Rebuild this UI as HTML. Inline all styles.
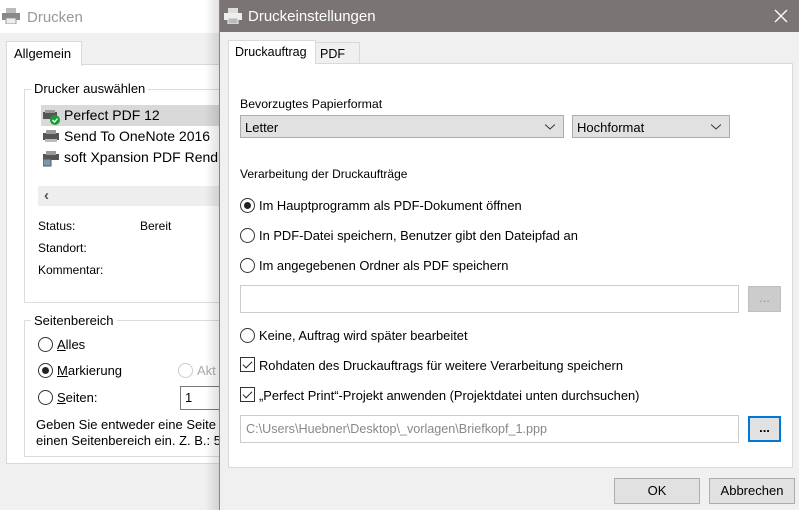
<!DOCTYPE html>
<html><head><meta charset="utf-8"><style>
*{margin:0;padding:0;box-sizing:border-box}
body{width:799px;height:510px;overflow:hidden;background:#f0f0f0;font-family:"Liberation Sans","DejaVu Sans",sans-serif;font-size:12px;color:#000;position:relative}
.a{position:absolute}
.t{position:absolute;white-space:nowrap}
.o{font-size:12.9px}
.radio{position:absolute;width:15px;height:15px;border:1px solid #333;border-radius:50%;background:#fff}
.radio.on::after{content:"";position:absolute;left:3px;top:3px;width:7px;height:7px;border-radius:50%;background:#222}
.chk{position:absolute;width:15px;height:15px;border:1px solid #333;background:#fff}
.chk::after{content:"";position:absolute;left:4px;top:1px;width:4px;height:8px;border:solid #222;border-width:0 1.5px 1.5px 0;transform:rotate(45deg)}
.combo{position:absolute;height:23px;background:#e1e1e1;border:1px solid #adadad;padding:4px 0 0 4px;font-size:13px}
.combo svg{position:absolute;right:8px;top:8px}
.btn{position:absolute;background:#e1e1e1;border:1px solid #adadad;text-align:center;font-size:13px}
</style></head><body>
<div class="a" style="left:0;top:0;width:230px;height:33px;background:#fff"></div>
<svg class="a" style="left:2px;top:8px" width="18" height="16"><rect x="4" y="0" width="10" height="5" fill="#bbb"/><rect x="0" y="5" width="18" height="7" fill="#888"/><rect x="4" y="10" width="10" height="6" fill="#eee" stroke="#999"/></svg>
<div class="t" style="left:27px;top:9px;font-size:15px;color:#999">Drucken</div>
<div class="a" style="left:6px;top:64px;width:220px;height:400px;background:#fff;border:1px solid #d9d9d9"></div>
<div class="a" style="left:6px;top:41px;width:76px;height:25px;background:#fff;border:1px solid #d9d9d9;border-bottom:none"></div>
<div class="t" style="left:14px;top:46px;font-size:13px">Allgemein</div>
<div class="a" style="left:24px;top:89px;width:210px;height:214px;border:1px solid #dcdcdc"></div>
<div class="t" style="left:31px;top:81px;font-size:13px;background:#fff;padding:0 3px">Drucker auswählen</div>
<div class="a" style="left:41px;top:105px;width:190px;height:21px;background:#d9d9d9"></div>
<svg class="a" style="left:43px;top:110px" width="18" height="16"><rect x="0" y="2" width="14" height="7" fill="#555"/><rect x="2" y="0" width="10" height="3" fill="#999"/><circle cx="12" cy="10" r="5" fill="#1a9b3a"/><path d="M9.5 10l2 2 3-3.5" stroke="#fff" fill="none" stroke-width="1.3"/></svg>
<div class="t" style="left:64px;top:107px;font-size:14px">Perfect PDF 12</div>
<svg class="a" style="left:43px;top:130px" width="18" height="14"><rect x="0" y="3" width="16" height="7" fill="#555"/><rect x="3" y="0" width="10" height="4" fill="#999"/><rect x="2" y="9" width="12" height="3" fill="#bbb"/></svg>
<div class="t" style="left:64px;top:128px;font-size:14px">Send To OneNote 2016</div>
<svg class="a" style="left:43px;top:151px" width="18" height="16"><rect x="0" y="3" width="16" height="6" fill="#555"/><rect x="3" y="0" width="10" height="4" fill="#999"/><rect x="0" y="8" width="8" height="7" fill="#79a" stroke="#555"/></svg>
<div class="t" style="left:64px;top:149px;font-size:14px">soft Xpansion PDF Rend</div>
<div class="a" style="left:38px;top:186px;width:185px;height:20px;background:#eee"></div>
<div class="t" style="left:44px;top:187px;font-size:15px;color:#555;font-weight:bold">‹</div>
<div class="t" style="left:38px;top:219px">Status:</div>
<div class="t" style="left:140px;top:219px">Bereit</div>
<div class="t" style="left:38px;top:241px">Standort:</div>
<div class="t" style="left:38px;top:263px">Kommentar:</div>
<div class="a" style="left:24px;top:320px;width:210px;height:137px;border:1px solid #dcdcdc"></div>
<div class="t" style="left:31px;top:313px;font-size:13px;background:#fff;padding:0 3px">Seitenbereich</div>
<div class="radio" style="left:38px;top:337px"></div><div class="t" style="left:57px;top:337px;font-size:13px"><u>A</u>lles</div>
<div class="radio on" style="left:38px;top:363px"></div><div class="t" style="left:57px;top:363px;font-size:13px"><u>M</u>arkierung</div>
<div class="radio" style="left:178px;top:363px;border-color:#ccc"></div><div class="t" style="left:197px;top:363px;font-size:13px;color:#aaa">Akt</div>
<div class="radio" style="left:38px;top:390px"></div><div class="t" style="left:57px;top:390px;font-size:13px"><u>S</u>eiten:</div>
<div class="a" style="left:180px;top:386px;width:45px;height:24px;border:1px solid #7a7a7a;padding:3px 4px;font-size:13px">1</div>
<div class="t" style="left:36px;top:417px;font-size:13px;line-height:16px">Geben Sie entweder eine Seite<br>einen Seitenbereich ein. Z. B.: 5</div>
<div class="a" style="left:205px;top:0;width:14px;height:510px;background:linear-gradient(to right,rgba(0,0,0,0),rgba(0,0,0,0.12))"></div>
<div class="a" style="left:219px;top:0;width:580px;height:510px;background:#f0f0f0;border-left:1px solid #888"></div>
<div class="a" style="left:220px;top:0;width:579px;height:32px;background:#7a7574"></div>
<svg class="a" style="left:224px;top:8px" width="18" height="16"><rect x="4" y="0" width="10" height="5" fill="#ddd"/><rect x="0" y="5" width="18" height="7" fill="#eee"/><rect x="4" y="10" width="10" height="6" fill="#bbb" stroke="#eee"/></svg>
<div class="t" style="left:248px;top:8px;font-size:15px;color:#fff">Druckeinstellungen</div>
<svg class="a" style="left:774px;top:9px" width="14" height="14"><path d="M1 1L13 13M13 1L1 13" stroke="#fff" stroke-width="1.3"/></svg>
<div class="a" style="left:228px;top:63px;width:565px;height:405px;background:#fff;border:1px solid #d9d9d9"></div>
<div class="a" style="left:228px;top:40px;width:88px;height:24px;background:#fff;border:1px solid #d9d9d9;border-bottom:none"></div>
<div class="a" style="left:315px;top:42px;width:45px;height:21px;background:#f0f0f0;border:1px solid #d9d9d9;border-bottom:none"></div>
<div class="t" style="left:235px;top:45px;font-size:12.5px">Druckauftrag</div>
<div class="t" style="left:320px;top:47px;font-size:12.5px">PDF</div>
<div class="t" style="left:240px;top:97px;font-size:12.3px">Bevorzugtes Papierformat</div>
<div class="combo" style="left:240px;top:115px;width:324px">Letter<svg width="10" height="6"><path d="M0 0.5L5 5L10 0.5" stroke="#333" fill="none"/></svg></div>
<div class="combo" style="left:572px;top:115px;width:158px">Hochformat<svg width="10" height="6"><path d="M0 0.5L5 5L10 0.5" stroke="#333" fill="none"/></svg></div>
<div class="t" style="left:240px;top:167px">Verarbeitung der Druckaufträge</div>
<div class="radio on" style="left:240px;top:198px"></div><div class="t o" style="left:259px;top:198px">Im Hauptprogramm als PDF-Dokument öffnen</div>
<div class="radio" style="left:240px;top:228px"></div><div class="t o" style="left:259px;top:228px">In PDF-Datei speichern, Benutzer gibt den Dateipfad an</div>
<div class="radio" style="left:240px;top:258px"></div><div class="t o" style="left:259px;top:258px">Im angegebenen Ordner als PDF speichern</div>
<div class="a" style="left:240px;top:285px;width:499px;height:28px;border:1px solid #ccc;background:#fff"></div>
<div class="btn" style="left:748px;top:286px;width:33px;height:26px;background:#ccc;border-color:#bfbfbf;color:#999;line-height:22px">...</div>
<div class="radio" style="left:240px;top:328px"></div><div class="t o" style="left:259px;top:328px">Keine, Auftrag wird später bearbeitet</div>
<div class="chk" style="left:240px;top:357px"></div><div class="t o" style="left:259px;top:358px">Rohdaten des Druckauftrags für weitere Verarbeitung speichern</div>
<div class="chk" style="left:240px;top:387px"></div><div class="t o" style="left:259px;top:388px">„Perfect Print“-Projekt anwenden (Projektdatei unten durchsuchen)</div>
<div class="a" style="left:240px;top:415px;width:499px;height:28px;border:1px solid #ccc;background:#fff;color:#888;padding:6px 5px;font-size:12.6px">C:\Users\Huebner\Desktop\_vorlagen\Briefkopf_1.ppp</div>
<div class="btn" style="left:748px;top:416px;width:33px;height:26px;border:2px solid #0078d7;line-height:20px;font-weight:bold">...</div>
<div class="btn" style="left:614px;top:478px;width:86px;height:26px;line-height:24px">OK</div>
<div class="btn" style="left:709px;top:478px;width:86px;height:26px;line-height:24px">Abbrechen</div>
</body></html>
